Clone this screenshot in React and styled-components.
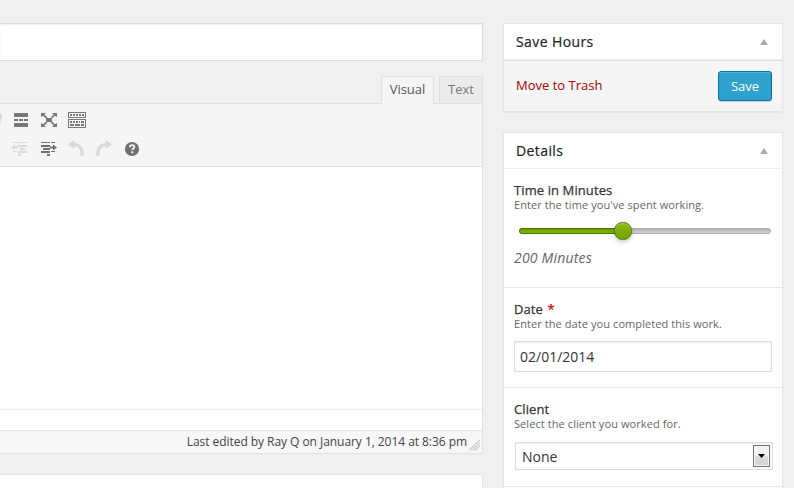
import React from "react";
import styled, { createGlobalStyle, css } from "styled-components";

const GlobalStyle = createGlobalStyle`
  * { box-sizing: border-box; }
  body {
    margin: 0;
    background: #f0f0f0;
    color: #333;
    font: 13px/18px "Open Sans", sans-serif;
    overflow: hidden;
  }
`;

const Page = styled.div`
  display: flex;
  align-items: flex-start;
  gap: 20px;
  width: 794px;
  height: 488px;
  padding-top: 23px;
  overflow: hidden;
`;

const EditorColumn = styled.main`
  display: flex;
  flex-direction: column;
  width: 483px;
`;

const TitleField = styled.div`
  height: 38px;
  border: 1px solid #ddd;
  border-left: 0;
  background: #fff;
  box-shadow: inset 0 1px 2px rgba(0, 0, 0, 0.07);
`;

const Tabs = styled.div`
  display: flex;
  justify-content: flex-end;
  gap: 5px;
  height: 27px;
  margin-top: 15px;
`;

const Tab = styled.div`
  width: ${(p) => p.$width}px;
  height: ${(p) => (p.$active ? 28 : 27)}px;
  border: 1px solid #e0e0e0;
  border-bottom: 0;
  background: ${(p) => (p.$active ? "#f5f5f5" : "#ebebeb")};
  color: ${(p) => (p.$active ? "#555" : "#777")};
  text-align: center;
  line-height: 24px;
  z-index: 1;
`;

const Editor = styled.section`
  height: 351px;
  border: 1px solid #e1e1e1;
  border-left: 0;
  background: #fff;
  display: flex;
  flex-direction: column;
`;

const Toolbar = styled.div`
  height: 63px;
  background: #f5f5f5;
  border-bottom: 1px solid #dedede;
`;

const ToolbarArt = styled.svg`
  display: block;
`;

const Canvas = styled.div`
  height: 242px;
`;

const PathBar = styled.div`
  height: 21px;
  border-top: 1px solid #eee;
`;

const StatusBar = styled.div`
  display: flex;
  justify-content: flex-end;
  height: 23px;
  padding-right: 1px;
  border-top: 1px solid #e1e1e1;
  background: #f7f7f7;
  color: #444;
  font-size: 12px;
  line-height: 22px;
  letter-spacing: -0.05px;
`;

const ResizeGrip = styled.svg`
  margin: 8px 1px 0 2px;
`;

const NextBox = styled.div`
  height: 60px;
  margin-top: 20px;
  border: 1px solid #e5e5e5;
  border-left: 0;
  background: #fff;
`;

const Sidebar = styled.aside`
  display: flex;
  flex-direction: column;
  gap: 20px;
  width: 280px;
`;

const Panel = styled.section`
  border: 1px solid #e5e5e5;
  background: #fff;
  box-shadow: 0 1px 1px rgba(0, 0, 0, 0.04);
`;

const PanelHeader = styled.header`
  display: flex;
  align-items: center;
  justify-content: space-between;
  height: 36px;
  padding: 0 14px 0 12px;
  border-bottom: 1px solid #eee;
  color: #222;
`;

const PanelTitle = styled.h2`
  margin: 0;
  font-size: 14px;
  font-weight: 400;
  line-height: 20px;
  letter-spacing: 0.4px;
  -webkit-text-stroke: 0.2px #222;
`;

const Caret = styled.svg`
  display: block;
  fill: #aaa;
`;

const Actions = styled.div`
  display: flex;
  align-items: center;
  justify-content: space-between;
  height: 51px;
  padding: 0 10px 0 12px;
  border-top: 1px solid #ddd;
  background: #f5f5f5;
`;

const TrashLink = styled.a`
  padding-bottom: 2px;
  color: #a00;
`;

const SaveButton = styled.button`
  width: 54px;
  height: 30px;
  padding: 0;
  border: 1px solid #0074a2;
  border-radius: 3px;
  background: #2ea2cc;
  box-shadow: inset 0 1px 0 rgba(120, 200, 230, 0.5), 0 1px 0 rgba(0, 0, 0, 0.15);
  color: #fff;
  font: 13px/28px "Open Sans", sans-serif;
`;

const Field = styled.div`
  height: ${(p) => p.$height}px;
  padding: 13px 10px 0;
  border-bottom: 1px solid #e8e8e8;
`;

const Label = styled.div`
  color: #333;
  font-size: 13px;
  line-height: 16px;
  letter-spacing: 0.1px;
  -webkit-text-stroke: 0.25px #333;
`;

const Required = styled.span`
  margin-left: 1px;
  color: #c00;
  -webkit-text-stroke-color: #c00;
`;

const Hint = styled.div`
  color: #666;
  font-size: 11px;
  line-height: 14px;
  letter-spacing: 0.08px;
`;

const Slider = styled.div`
  position: relative;
  width: 252px;
  height: 6px;
  margin: 16px 0 0 5px;
  border: 1px solid #aaa;
  border-radius: 3px;
  background: linear-gradient(#b5b5b5, #d0d0d0);
`;

const SliderFill = styled.div`
  width: 104px;
  height: 6px;
  margin: -1px;
  border: 1px solid #467000;
  border-radius: 3px 0 0 3px;
  background: linear-gradient(#6d9f00, #80b507);
`;

const SliderHandle = styled.div`
  position: absolute;
  left: 94px;
  top: -7px;
  width: 18px;
  height: 18px;
  border: 1px solid #4d7503;
  border-radius: 8.5px;
  background: linear-gradient(#8abb12, #72a300);
  box-shadow: inset 0 1px 1px #a9d34b, 0 2px 4px rgba(0, 0, 0, 0.22);
`;

const SliderValue = styled.div`
  margin-top: 14px;
  color: #666;
  font-size: 14px;
  font-style: italic;
  line-height: 20px;
  letter-spacing: 0.2px;
`;

const controlStyle = css`
  border: 1px solid #ddd;
  background: #fff;
  box-shadow: inset 0 1px 2px rgba(0, 0, 0, 0.07);
  color: #333;
  font-size: 14px;
`;

const DateInput = styled.div`
  ${controlStyle}
  width: 258px;
  height: 31px;
  margin-top: 10px;
  padding-left: 5px;
  line-height: 29px;
`;

const Select = styled.div`
  ${controlStyle}
  display: flex;
  justify-content: space-between;
  width: 258px;
  height: 28px;
  margin: 11px 0 0 1px;
  padding: 2px 2px 2px 6px;
  line-height: 24px;
`;

const SelectButton = styled.span`
  display: flex;
  align-items: center;
  justify-content: center;
  width: 17px;
  height: 22px;
  border: 1px solid #707070;
  background: linear-gradient(#f2f2f2 0 48%, #dedede 52%, #d0d0d0);
  box-shadow: inset 0 0 0 1px #f8f8f8;
`;

function ToolbarIcons() {
  return (
    <ToolbarArt width="482" height="62" viewBox="0 104 482 62" shapeRendering="crispEdges">
      <path d="M0 113h1v1h1v5h-1v1H0zM0 121h1v2H0z" fill="#dadada" />
      <g fill="#777">
        <path d="M14 113h14v4H14zM14 119h4v2h-4zM19 119h4v2h-4zM24 119h4v2h-4zM14 123h14v4H14z" />
      </g>
      <g fill="#777" shapeRendering="auto">
        <path d="M46 118h6v4h-6zM41 113h5l-1.6 1.6 3 3-1.2 1.2-3-3L41 117zM57 113h-5l1.6 1.6-3 3 1.2 1.2 3-3L57 117zM41 127h5l-1.6-1.6 3-3-1.2-1.2-3 3L41 123zM57 127h-5l1.6-1.6-3-3 1.2-1.2 3 3L57 123z" />
      </g>
      <g fill="#777">
        <path fillRule="evenodd" d="M68 112h18v6H68zM69 113v4h16v-4zM68 119h18v9H68zM69 120v7h16v-7z" />
        <path d="M70 114h2v2h-2zM73 114h2v2h-2zM76 114h2v2h-2zM79 114h2v2h-2zM82 114h2v2h-2zM70 121h2v2h-2zM73 121h2v2h-2zM76 121h2v2h-2zM79 121h1v2h-1zM81 121h3v2h-3zM70 124h4v2h-4zM75 124h5v2h-5zM81 124h3v2h-3z" />
      </g>
      <g fill="#dadada">
        <path d="M13 142h4v1h-4zM18 142h9v1h-9zM18 145h9v2h-9zM20 148h5v2h-5zM18 151h9v2h-9zM13 151h4v1h-4zM18 154h3v2h-3z" />
        <path d="M11 147.5l4-3v2h3v2h-3v2z" shapeRendering="auto" />
      </g>
      <g fill="#707070">
        <path d="M41 142h9v1h-9zM51 142h4v1h-4zM41 145h9v2h-9zM43 148h7v2h-7zM41 151h9v2h-9zM51 151h4v1h-4zM47 154h3v2h-3z" />
        <path d="M57 147.5l-4-3v2h-3v2h3v2z" shapeRendering="auto" />
      </g>
      <g shapeRendering="auto" fill="#dadada">
        <path d="M68 144.3l6.3-4.3v3c6 0 10 5 9.5 13h-3.2c.3-6-1.8-9.5-6.3-9.7v2.7z" />
        <path d="M112 144.3l-6.3-4.3v3c-6 0-10 5-9.5 13h3.2c-.3-6 1.8-9.5 6.3-9.7v2.7z" />
      </g>
      <g shapeRendering="auto">
        <circle cx="132" cy="149" r="7.1" fill="#707070" />
        <path d="M129.8 147.2c.1-1.4 1-2 2.3-2s2.3.7 2.3 1.8c0 1.5-2.1 1.4-2.1 3" fill="none" stroke="#f5f5f5" strokeWidth="1.8" />
        <path d="M131.3 151.3h2v2h-2z" fill="#f5f5f5" />
      </g>
    </ToolbarArt>
  );
}

function CaretUp() {
  return (
    <Caret width="8" height="6" viewBox="0 0 8 6">
      <path d="M4 0l4 6H0z" />
    </Caret>
  );
}

export default function App() {
  return (
    <>
      <GlobalStyle />
      <Page>
        <EditorColumn>
          <TitleField />
          <Tabs>
            <Tab $active $width={53}>Visual</Tab>
            <Tab $width={44}>Text</Tab>
          </Tabs>
          <Editor>
            <Toolbar>
              <ToolbarIcons />
            </Toolbar>
            <Canvas />
            <PathBar />
            <StatusBar>
              <span>Last edited by Ray Q on January 1, 2014 at 8:36 pm</span>
              <ResizeGrip width="11" height="12" viewBox="0 0 11 12">
                <path d="M0 11.5L11 .5M3 11.5l8-8M6 11.5l5-5" stroke="#aaa" strokeWidth="1" />
              </ResizeGrip>
            </StatusBar>
          </Editor>
          <NextBox />
        </EditorColumn>

        <Sidebar>
          <Panel>
            <PanelHeader>
              <PanelTitle>Save Hours</PanelTitle>
              <CaretUp />
            </PanelHeader>
            <Actions>
              <TrashLink>Move to Trash</TrashLink>
              <SaveButton>Save</SaveButton>
            </Actions>
          </Panel>

          <Panel>
            <PanelHeader>
              <PanelTitle>Details</PanelTitle>
              <CaretUp />
            </PanelHeader>
            <Field $height={119}>
              <Label>Time in Minutes</Label>
              <Hint>Enter the time you've spent working.</Hint>
              <Slider>
                <SliderFill />
                <SliderHandle />
              </Slider>
              <SliderValue>200 Minutes</SliderValue>
            </Field>
            <Field $height={100}>
              <Label>
                Date <Required>*</Required>
              </Label>
              <Hint>Enter the date you completed this work.</Hint>
              <DateInput>02/01/2014</DateInput>
            </Field>
            <Field $height={99}>
              <Label>Client</Label>
              <Hint>Select the client you worked for.</Hint>
              <Select>
                None
                <SelectButton>
                  <svg width="7" height="4" viewBox="0 0 7 4">
                    <path d="M0 0h7L3.5 4z" fill="#000" />
                  </svg>
                </SelectButton>
              </Select>
            </Field>
            <Field $height={60} />
          </Panel>
        </Sidebar>
      </Page>
    </>
  );
}
